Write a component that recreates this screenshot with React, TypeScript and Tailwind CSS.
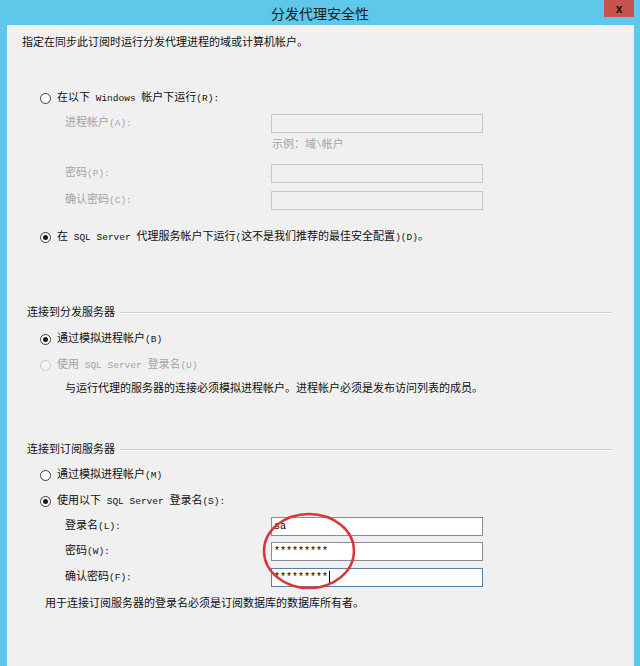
import React from "react";

// latin runs in the original use the narrow half-width glyphs, so shrink them a bit
function T({ children }: { children: string }) {
  const parts = children.split(/([\u3000-\u9fff\uff00-\uffef]+)/);
  return (
    <>
      {parts.map((p, i) =>
        i % 2 === 1 ? (
          <span key={i}>{p}</span>
        ) : (
          <span key={i} className="text-[9.5px]">
            {p}
          </span>
        ),
      )}
    </>
  );
}

function Radio({ checked = false, disabled = false }: { checked?: boolean; disabled?: boolean }) {
  return (
    <span
      className={
        "flex h-[11px] w-[11px] shrink-0 items-center justify-center rounded-full border " +
        (disabled ? "border-[#c4c4c4] bg-[#f4f4f4]" : "border-[#3c3c3c] bg-white")
      }
    >
      {checked && <span className="h-[5px] w-[5px] rounded-full bg-[#1a1a1a]" />}
    </span>
  );
}

function RadioRow({
  label,
  checked,
  disabled,
  mt,
}: {
  label: string;
  checked?: boolean;
  disabled?: boolean;
  mt: string;
}) {
  return (
    <div className={"flex h-[18px] items-center gap-[6px] pl-[33px] " + mt}>
      <Radio checked={checked} disabled={disabled} />
      <span className={disabled ? "text-[#a3a3a3]" : "text-[#111]"}>
        <T>{label}</T>
      </span>
    </div>
  );
}

function Field({
  label,
  value,
  disabled,
  focused,
  mt,
}: {
  label: string;
  value?: string;
  disabled?: boolean;
  focused?: boolean;
  mt: string;
}) {
  const box = disabled
    ? "border-[#c6c6c6] bg-[#f0f0f0]"
    : focused
      ? "border-[#5d7fa3] bg-white"
      : "border-[#8a8e94] bg-white";
  return (
    <div className={"flex h-[19px] items-center pl-[58px] " + mt}>
      <span className={"w-[206px] " + (disabled ? "text-[#a3a3a3]" : "text-[#111]")}>
        <T>{label}</T>
      </span>
      <div className={"flex h-[19px] w-[212px] items-center border px-[2px] text-[10px] text-black " + box}>
        {value}
        {focused && <span className="ml-[1px] h-[13px] w-px bg-black" />}
      </div>
    </div>
  );
}

function Section({ title, mt }: { title: string; mt: string }) {
  return (
    <div className={"flex h-[14px] items-center pl-[20px] pr-[20px] " + mt}>
      <span className="text-[#111]">{title}</span>
      <div className="ml-[5px] flex-1 border-t border-b border-t-[#d2d2d2] border-b-white" />
    </div>
  );
}

export default function App() {
  return (
    <div className="relative flex h-[666px] w-[640px] flex-col overflow-hidden bg-[#5fc7ea] font-['Liberation_Mono','Noto_Sans_CJK_SC',monospace] text-[11px] leading-[14px]">
      <div className="flex h-[25px] items-start">
        <div className="flex h-[25px] flex-1 items-center justify-center pl-[36px]">
          <span className="font-['Noto_Sans_CJK_SC',sans-serif] text-[14px] leading-[18px] text-[#1b1b1b]">
            分发代理安全性
          </span>
        </div>
        <div className="mr-[6px] flex h-[17px] w-[30px] items-center justify-center bg-[#c8534e] text-[12px] font-bold leading-none text-[#111]">
          <span className="font-['Liberation_Sans',sans-serif]">x</span>
        </div>
      </div>

      <div className="ml-[7px] mr-[6px] flex flex-1 flex-col border-r border-[#dfe9ee] bg-[#f0f0f0]">
        <div className="mt-[10px] flex h-[16px] items-center pl-[15px] text-[#111]">
          指定在同步此订阅时运行分发代理进程的域或计算机帐户。
        </div>

        <RadioRow label="在以下 Windows 帐户下运行(R):" mt="mt-[38px]" />
        <Field label="进程帐户(A):" disabled mt="mt-[7px]" />
        <div className="mt-[5px] flex h-[14px] items-center pl-[265px] text-[#a3a3a3]">
          <T>示例：域\帐户</T>
        </div>
        <Field label="密码(P):" disabled mt="mt-[12px]" />
        <Field label="确认密码(C):" disabled mt="mt-[8px]" />
        <RadioRow
          label="在 SQL Server 代理服务帐户下运行(这不是我们推荐的最佳安全配置)(D)。"
          checked
          mt="mt-[18px]"
        />

        <Section title="连接到分发服务器" mt="mt-[60px]" />
        <RadioRow label="通过模拟进程帐户(B)" checked mt="mt-[10px]" />
        <RadioRow label="使用 SQL Server 登录名(U)" disabled mt="mt-[8px]" />
        <div className="mt-[8px] flex h-[14px] items-center pl-[58px] text-[#111]">
          与运行代理的服务器的连接必须模拟进程帐户。进程帐户必须是发布访问列表的成员。
        </div>

        <Section title="连接到订阅服务器" mt="mt-[47px]" />
        <RadioRow label="通过模拟进程帐户(M)" mt="mt-[9px]" />
        <RadioRow label="使用以下 SQL Server 登录名(S):" checked mt="mt-[8px]" />
        <Field label="登录名(L):" value="sa" mt="mt-[7px]" />
        <Field label="密码(W):" value="*********" mt="mt-[6px]" />
        <Field label="确认密码(F):" value="*********" focused mt="mt-[7px]" />
        <div className="mt-[10px] flex h-[14px] items-center pl-[38px] text-[#111]">
          用于连接订阅服务器的登录名必须是订阅数据库的数据库所有者。
        </div>
      </div>

      <svg
        className="pointer-events-none absolute left-[261px] top-[511px]"
        width="96"
        height="80"
        viewBox="0 0 96 80"
      >
        <ellipse cx="48" cy="40" rx="45" ry="37" fill="none" stroke="#d8383b" strokeWidth="2.5" />
      </svg>
    </div>
  );
}
